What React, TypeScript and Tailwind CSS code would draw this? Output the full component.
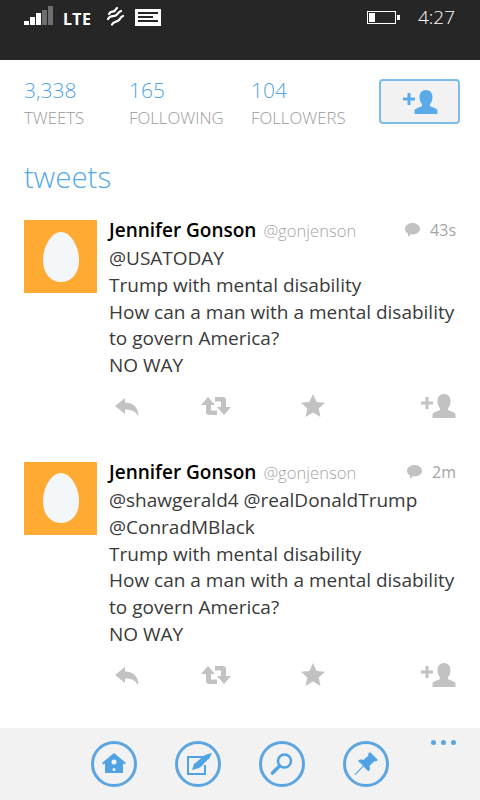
const font = { fontFamily: '"Open Sans", "Noto Sans", sans-serif' };

function Person({ color, className }: { color: string; className?: string }) {
  return (
    <svg viewBox="0 0 36 24" className={className} fill={color}>
      <path d="M1 7.500h4.500V3h3v4.500H13v3H8.500V15h-3v-4.500H1z" />
      <path d="M24 0c4 0 6.500 3 6.500 7.300 0 3-1 5.200-2.500 7v1.500c0 .8 3.500 1.700 5.500 2.600 1.600.7 2 1.300 2 2.600V24H12.500v-3c0-1.300.4-1.900 2-2.600 2-.9 5.500-1.800 5.500-2.600v-1.500c-1.500-1.800-2.500-4-2.500-7C17.500 3 20 0 24 0z" />
    </svg>
  );
}

function Actions() {
  const c = "#c2c2c2";
  return (
    <div className="flex items-center h-6 mt-[15px] pl-[6px] relative">
      <svg viewBox="0 0 24 20" className="w-6 h-5" fill={c}>
        <path d="M10 2v4.500c7.500 0 12.500 4 13.500 12l-.7 1C20 15 16 13.500 10 13.500V18L0 10z" />
      </svg>
      <svg viewBox="0 0 30 20" className="w-[30px] h-5 ml-[62px]" fill={c}>
        <path d="M7 1l7 8h-4v5.500h6V19H8c-2 0-3-1-3-3V9H0z" />
        <path d="M23 19l-7-8h4V5.500h-6V1h8c2 0 3 1 3 3v7h5z" />
      </svg>
      <svg viewBox="0 0 24 23" className="w-6 h-[23px] ml-[70px]" fill={c}>
        <path d="M12 0l3.600 8 8.400.8-6.300 5.700 1.800 8.500-7.500-4.400L4.500 23l1.800-8.500L0 8.800 8.400 8z" />
      </svg>
      <div className="ml-auto">
        <Person color={c} className="w-[36px] h-6 block" />
      </div>
    </div>
  );
}

function Tweet({ time, lines }: { time: string; lines: string[] }) {
  return (
    <div className="flex gap-3 pl-6 pr-[24px]">
      <div className="w-[73px] h-[73px] bg-[#ffaa33] flex items-center justify-center shrink-0 mt-[1px]">
        <svg viewBox="0 0 36 50" className="w-9 h-[50px]" fill="#f4f7fa">
          <path d="M18 0c10 0 18 15 18 28 0 14-8 22-18 22S0 42 0 28C0 15 8 0 18 0z" />
        </svg>
      </div>
      <div className="flex-1 min-w-0">
        <div className="flex items-baseline h-[27px] -mt-[3px] whitespace-nowrap">
          <span className="text-[19px] font-semibold text-black">Jennifer Gonson</span>
          <span className="text-[16.600px] text-[#a5a5a5] ml-[7px] font-light">@gonjenson</span>
          <span className="ml-auto flex items-center text-[16px] text-[#a5a5a5]">
            <svg viewBox="0 0 15 14" className="w-[15px] h-[14px] mr-[10px] self-center" fill="#c2c2c2">
              <path d="M7.500 0C11.700 0 15 2.500 15 5.700s-3.300 5.700-7.500 5.700c-.6 0-1.200 0-1.700-.1L3 14v-3.400C1.200 9.600 0 7.800 0 5.700 0 2.500 3.300 0 7.500 0z" />
            </svg>
            {time}
          </span>
        </div>
        <div className="text-[19px] leading-[26.800px] text-[#3a3a3a] mt-[2px]">
          {lines.map((l) => (
            <div key={l} className="whitespace-nowrap">{l}</div>
          ))}
        </div>
        <Actions />
      </div>
    </div>
  );
}

function Circle({ children }: { children: React.ReactNode }) {
  return (
    <div className="w-[46px] h-[46px] rounded-full border-[3px] border-[#5ba5e0] flex items-center justify-center">
      {children}
    </div>
  );
}

export default function App() {
  const blue = "#4fa3e3";
  return (
    <div className="w-[480px] h-[800px] bg-white flex flex-col overflow-hidden" style={font}>
      <div className="h-[60px] bg-[#262626] flex items-start pl-6 pr-[25px] pt-[6px] text-white shrink-0">
        <svg viewBox="0 0 29 20" className="w-[29px] h-5">
          <rect x="0" y="15" width="5" height="4" fill="#fff" />
          <rect x="6" y="11" width="5" height="8" fill="#fff" />
          <rect x="12" y="7" width="5" height="12" fill="#fff" />
          <rect x="18" y="4" width="5" height="15" fill="#6e6e6e" />
          <rect x="24" y="0" width="5" height="19" fill="#6e6e6e" />
        </svg>
        <span className="ml-[10px] text-[16px] font-bold tracking-[0.6px] leading-[20px] mt-[3px]" style={{ fontFamily: '"Noto Sans", sans-serif' }}>LTE</span>
        <svg viewBox="0 0 18 20" className="w-[18px] h-5 ml-[14px] mt-[1px]" fill="none" stroke="#fff" strokeWidth="2.200" strokeLinecap="round">
          <path d="M3 7C5 3 7 6 9 3.500 10 2 10.500 1.500 11 1" />
          <path d="M2 12C5 7 8 11 11 7.500 12.500 5.500 13.500 4.500 15 4" />
          <path d="M6 17.500C8.500 13 11 16 13.500 12.500 14.500 10.500 15.500 9.500 17 9" />
        </svg>
        <div className="w-[26px] h-[17px] bg-white ml-[11px] mt-[3px] flex flex-col gap-[2px] pl-[3px] pt-[3px]">
          <div className="w-[20px] h-[2px] bg-[#262626]" />
          <div className="w-[15px] h-[2px] bg-[#262626]" />
          <div className="w-[20px] h-[2px] bg-[#262626]" />
        </div>
        <div className="ml-auto flex items-center mt-[5px]">
          <div className="w-[29px] h-[13px] border border-white p-[1px]">
            <div className="w-[6px] h-full bg-white" />
          </div>
          <div className="w-[3px] h-[5px] bg-white ml-[1px]" />
        </div>
        <span className="ml-[18px] text-[19px] font-light leading-[24px] -mt-[1px]">4:27</span>
      </div>

      <div className="flex items-start pl-6 pr-5 pt-[19px] h-[88px] shrink-0 relative">
        {[
          ["3,338", "TWEETS", "w-[105px]"],
          ["165", "FOLLOWING", "w-[122px]"],
          ["104", "FOLLOWERS", "w-[128px]"],
        ].map(([n, l, w]) => (
          <div key={l} className={w}>
            <div className="text-[21px] leading-[22px] font-light text-[#4fa3e3]">{n}</div>
            <div className="text-[16.800px] leading-[22px] mt-[6px] text-[#9a9a9a] font-light">{l}</div>
          </div>
        ))}
        <div className="w-[81px] h-[45px] rounded-[4px] border-2 border-[#7dbdea] bg-[#f2f2f2] flex items-center justify-center">
          <Person color="#5cabe9" className="w-[36px] h-6 block" />
        </div>
      </div>

      <div className="pl-6 text-[29.500px] leading-[36px] text-[#55a9e6] font-light shrink-0 h-[71px] pt-[11px]">tweets</div>

      <div className="flex-1 flex flex-col gap-[43px]">
        <Tweet time="43s" lines={["@USATODAY", "Trump with mental disability", "How can a man with a mental disability", "to govern America?", "NO WAY"]} />
        <Tweet time="2m" lines={["@shawgerald4 @realDonaldTrump", "@ConradMBlack", "Trump with mental disability", "How can a man with a mental disability", "to govern America?", "NO WAY"]} />
      </div>

      <div className="h-[72px] bg-[#f2f2f2] shrink-0 flex justify-center gap-[38px] pt-[13px] relative">
        <Circle>
          <svg viewBox="0 0 24 22" className="w-6 h-[22px]">
            <path d="M12 0l12 10-1.500 1.500-1.500-1V20H3V10.500l-1.500 1L0 10z" fill={blue} />
            <circle cx="12" cy="9" r="2.500" fill="#f2f2f2" />
            <circle cx="12" cy="16.500" r="1.500" fill="#f2f2f2" />
          </svg>
        </Circle>
        <Circle>
          <svg viewBox="0 0 28 24" className="w-7 h-6 ml-[2px]">
            <path d="M19 5H3v17h17v-9" fill="none" stroke={blue} strokeWidth="2" />
            <path d="M7 18l2-6L20 3l7-2-3 6-2 1 0 1-2 1-2 3-4 3z" fill={blue} />
          </svg>
        </Circle>
        <Circle>
          <svg viewBox="0 0 24 24" className="w-6 h-6">
            <circle cx="14.500" cy="9" r="6.500" fill="none" stroke={blue} strokeWidth="2.500" />
            <path d="M9.500 14l-7 7" stroke={blue} strokeWidth="3.500" strokeLinecap="round" />
          </svg>
        </Circle>
        <Circle>
          <svg viewBox="0 0 24 24" className="w-6 h-6">
            <path d="M16 0l8 8-2 1.500-1.500-.5L15.500 14c.8 2.500.3 4-1 5.500L9.500 14.500 1.500 23l-.8-.8L9 13.500 4 9c1.500-1.500 3.500-1.800 5.500-1L14.500 3.500 14 2z" fill={blue} />
          </svg>
        </Circle>
        <div className="absolute right-[24px] top-[12px] flex gap-[5px]">
          <div className="w-[5px] h-[5px] rounded-full bg-[#5ba5e0]" />
          <div className="w-[5px] h-[5px] rounded-full bg-[#5ba5e0]" />
          <div className="w-[5px] h-[5px] rounded-full bg-[#5ba5e0]" />
        </div>
      </div>
    </div>
  );
}
